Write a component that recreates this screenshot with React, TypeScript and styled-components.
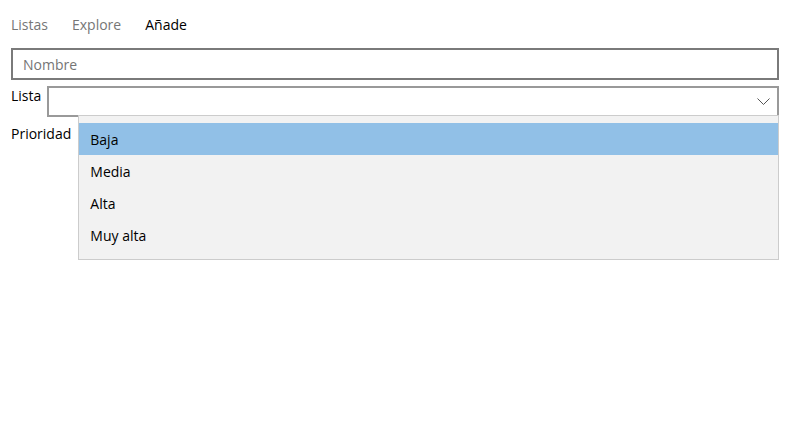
import React from 'react'
import styled, { createGlobalStyle } from 'styled-components'

const GlobalStyle = createGlobalStyle`
  body {
    margin: 0;
    background: #ffffff;
    font-family: 'Open Sans', 'Noto Sans', sans-serif;
    color: #000;
  }
`

const Page = styled.div`
  padding: 0 11px;
  width: 790px;
  height: 427px;
  box-sizing: border-box;
`

const Tabs = styled.nav`
  display: flex;
  gap: 24px;
  height: 48px;
  align-items: center;
  padding-bottom: 0;
  box-sizing: border-box;
`

const Tab = styled.span<{ $active?: boolean }>`
  font-size: 14px;
  color: ${({ $active }) => ($active ? '#000' : '#767676')};
`

const NameInput = styled.input`
  display: block;
  width: 100%;
  height: 32px;
  box-sizing: border-box;
  border: 2px solid #7a7a7a;
  padding: 0 10px;
  font-family: inherit;
  font-size: 14px;
  outline: none;

  ::placeholder {
    color: #6b6b6b;
  }
`

const FieldRow = styled.div<{ $top: number }>`
  display: flex;
  align-items: flex-start;
  margin-top: ${({ $top }) => $top}px;
`

const Label = styled.label<{ $offset?: number }>`
  font-size: 14px;
  line-height: 20px;
  margin-top: ${({ $offset }) => $offset ?? 0}px;
  margin-right: 6px;
`

const Combo = styled.div`
  position: relative;
  flex: 1;
  height: 31px;
  box-sizing: border-box;
  border: 2px solid #999999;
  display: flex;
  align-items: center;
  justify-content: flex-end;
  padding-right: 7px;
`

const Menu = styled.ul`
  position: absolute;
  left: 29px;
  right: -2px;
  top: 27px;
  margin: 0;
  padding: 7px 0 8px;
  list-style: none;
  background: #f2f2f2;
  border: 1px solid #cccccc;
  z-index: 2;
`

const Option = styled.li<{ $selected?: boolean }>`
  height: 32px;
  display: flex;
  align-items: center;
  padding-left: 11px;
  font-size: 14px;
  background: ${({ $selected }) => ($selected ? '#91c0e7' : 'transparent')};
`

const Chevron = () => (
  <svg width="13" height="8" viewBox="0 0 13 8">
    <path d="M0.5 0.5 L6.5 6.5 L12.5 0.5" fill="none" stroke="#555" strokeWidth="1" />
  </svg>
)

const options = ['Baja', 'Media', 'Alta', 'Muy alta']

const App: React.FC = () => {
  return (
    <Page>
      <GlobalStyle />
      <Tabs>
        <Tab>Listas</Tab>
        <Tab>Explore</Tab>
        <Tab $active>Añade</Tab>
      </Tabs>
      <NameInput placeholder="Nombre" />
      <FieldRow $top={6}>
        <Label $offset={0}>Lista</Label>
        <Combo>
          <Chevron />
          <Menu>
            {options.map((o, i) => (
              <Option key={o} $selected={i === 0}>
                {o}
              </Option>
            ))}
          </Menu>
        </Combo>
      </FieldRow>
      <FieldRow $top={7}>
        <Label>Prioridad</Label>
      </FieldRow>
    </Page>
  )
}

export default App
